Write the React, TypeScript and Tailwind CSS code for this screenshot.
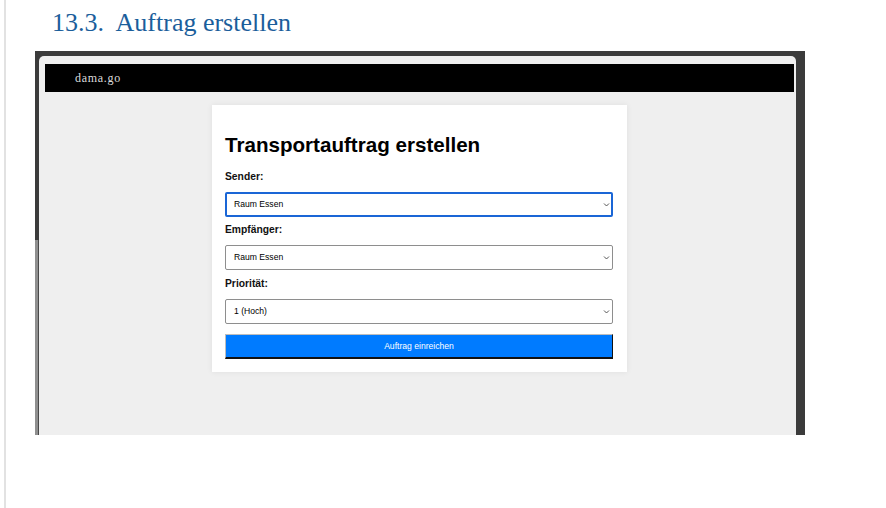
import React from "react";

function Chevron() {
    return (
        <svg
            className="pointer-events-none absolute right-[3px] top-1/2 -translate-y-1/2"
            width="7"
            height="5"
            viewBox="0 0 7 5"
        >
            <path d="M1 1 L3.5 3.5 L6 1" fill="none" stroke="#444" strokeWidth="0.9" />
        </svg>
    );
}

function Field({
    label,
    value,
    focused = false,
    className = ""
}: {
    label: string;
    value: string;
    focused?: boolean;
    className?: string;
}) {
    return (
        <div className={className}>
            <label className="block text-[10.3px] font-bold leading-[12px] text-[#111]">{label}</label>
            <div className="relative mt-[9px]">
                <select
                    defaultValue={value}
                    className={
                        focused
                            ? "block h-[25px] w-full appearance-none rounded-[2px] border-2 border-[#1a66d6] bg-white pl-[7px] text-[8.6px] text-black outline-none"
                            : "block h-[25px] w-full appearance-none rounded-[2px] border border-[#8e8e8e] bg-white pl-[8px] text-[8.6px] text-black outline-none"
                    }
                >
                    <option>{value}</option>
                </select>
                <Chevron />
            </div>
        </div>
    );
}

export default function App() {
    return (
        <div className="h-[508px] w-[886px] overflow-hidden bg-white">
            <div className="ml-[4px] h-full border-l-2 border-[#e2e2e2]">
                <h2 className="whitespace-pre pl-[46px] pt-[8px] font-['Liberation_Serif',serif] text-[26px] leading-[30px] text-[#1b5e9b]">
                    13.3.  Auftrag erstellen
                </h2>

                {/* screenshot frame */}
                <div className="ml-[29px] mt-[13px] flex h-[384px] w-[770px] bg-[#3b3b3b] pr-[9px] pt-[5px]">
                    <div className="flex w-[4px] flex-col">
                        <div className="h-[184px]" />
                        <div className="flex-1 border-l-[3px] border-[#8f8f8f] bg-[#4a4a4a]" />
                    </div>

                    <div className="flex-1 rounded-t-[5px] bg-[#efefef] pl-[6px] pr-[2px] pt-[8px]">
                        <div className="flex h-[28px] items-center bg-black pl-[30px] font-['Liberation_Serif',serif] text-[12px] tracking-[0.7px] text-[#dcdcdc]">
                            dama.go
                        </div>

                        <div className="mx-auto mt-[13px] w-[415px] bg-white pb-[13px] pl-[13px] pr-[14px] pt-[13px] font-['Liberation_Sans',Arial,sans-serif] shadow-[0_0_6px_rgba(0,0,0,0.07)]">
                            <h1 className="mt-[15px] text-[20.6px] font-bold leading-[24px] text-black">
                                Transportauftrag erstellen
                            </h1>

                            <Field className="mt-[14px]" label="Sender:" value="Raum Essen" focused />
                            <Field className="mt-[7px]" label="Empfänger:" value="Raum Essen" />
                            <Field className="mt-[8px]" label="Priorität:" value="1 (Hoch)" />

                            <button
                                type="button"
                                className="mt-[10px] block h-[25px] w-full border border-b-2 border-b-[#111] border-l-[#bdbdbd] border-r-[#111] border-t-[#bdbdbd] bg-[#007bff] text-[8.6px] text-white"
                            >
                                Auftrag einreichen
                            </button>
                        </div>
                    </div>
                </div>
            </div>
        </div>
    );
}
